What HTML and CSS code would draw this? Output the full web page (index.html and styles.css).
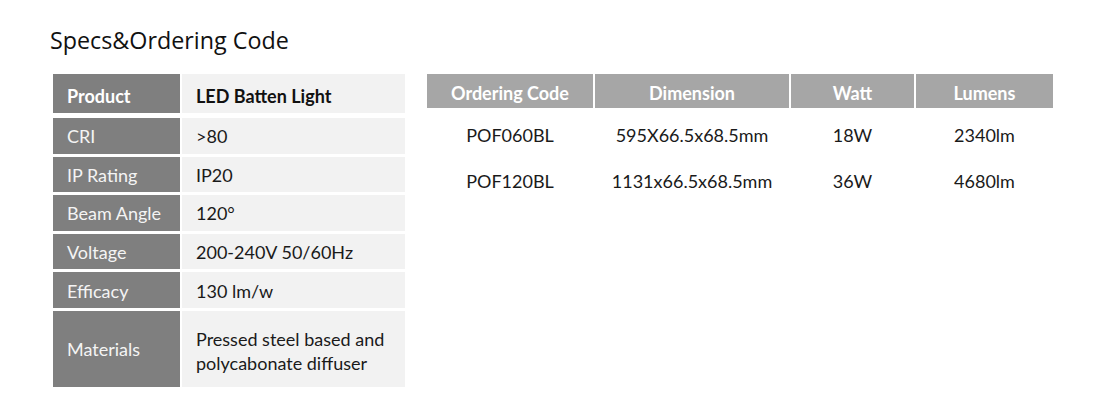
FILE: index.html
```html
<!DOCTYPE html>
<html>
<head>
<meta charset="utf-8">
<link rel="stylesheet" href="styles.css">
</head>
<body>
<div class="page">
  <h1 class="title">Specs&amp;Ordering Code</h1>
  <div class="tables">
    <div class="specs">
      <div class="row row-head">
        <div class="label">Product</div>
        <div class="value">LED Batten Light</div>
      </div>
      <div class="row">
        <div class="label">CRI</div>
        <div class="value">&gt;80</div>
      </div>
      <div class="row">
        <div class="label">IP Rating</div>
        <div class="value">IP20</div>
      </div>
      <div class="row">
        <div class="label">Beam Angle</div>
        <div class="value">120°</div>
      </div>
      <div class="row">
        <div class="label">Voltage</div>
        <div class="value">200-240V 50/60Hz</div>
      </div>
      <div class="row">
        <div class="label">Efficacy</div>
        <div class="value">130 lm/w</div>
      </div>
      <div class="row row-tall">
        <div class="label">Materials</div>
        <div class="value">Pressed steel based and<br>polycabonate diffuser</div>
      </div>
    </div>
    <div class="codes">
      <div class="th">Ordering Code</div>
      <div class="th">Dimension</div>
      <div class="th">Watt</div>
      <div class="th">Lumens</div>
      <div class="td">POF060BL</div>
      <div class="td">595X66.5x68.5mm</div>
      <div class="td">18W</div>
      <div class="td">2340lm</div>
      <div class="td">POF120BL</div>
      <div class="td">1131x66.5x68.5mm</div>
      <div class="td">36W</div>
      <div class="td">4680lm</div>
    </div>
  </div>
</div>
</body>
</html>
```
FILE: styles.css
```css
* { box-sizing: border-box; }
html, body { margin: 0; padding: 0; background: #ffffff; }
body { width: 1120px; height: 400px; overflow: hidden; }
.page { padding: 24px 0 0 50px; }
.title {
  margin: 0;
  font-family: "Open Sans", sans-serif;
  font-weight: 400;
  font-size: 23.3px;
  line-height: 32px;
  color: #111111;
}
.tables {
  display: flex;
  align-items: flex-start;
  gap: 22px;
  margin-top: 18px;
  margin-left: 3px;
  font-family: Lato, "Open Sans", sans-serif;
  font-size: 18px;
}
.specs {
  display: flex;
  flex-direction: column;
  gap: 3px;
  width: 352px;
}
.row {
  display: grid;
  grid-template-columns: 127px 223px;
  column-gap: 2px;
  height: 35.6px;
}
.row-head { height: 39px; margin-bottom: 2px; }
.row-tall { height: 76px; }
.label, .value {
  display: flex;
  align-items: center;
  padding-left: 14px;
  padding-top: 1px;
  line-height: 24px;
}
.row-head .label, .row-head .value { padding-top: 4px; }
.row-tall .value { padding-top: 4px; }
.label { background: #7f7f7f; color: #f4f4f4; }
.value { background: #f2f2f2; color: #1a1a1a; }
.row-head .label { color: #ffffff; font-weight: 700; }
.row-head .value { font-weight: 700; color: #111111; }
.codes {
  display: grid;
  grid-template-columns: 166px 194px 123px 137px;
  grid-template-rows: 34px 46px 46px;
  column-gap: 2px;
  width: 626px;
}
.th, .td {
  display: flex;
  align-items: center;
  justify-content: center;
}
.th {
  background: #a6a6a6;
  color: #ffffff;
  font-weight: 700;
  padding-top: 3px;
}
.td {
  color: #1a1a1a;
  padding-top: 8px;
}
```
